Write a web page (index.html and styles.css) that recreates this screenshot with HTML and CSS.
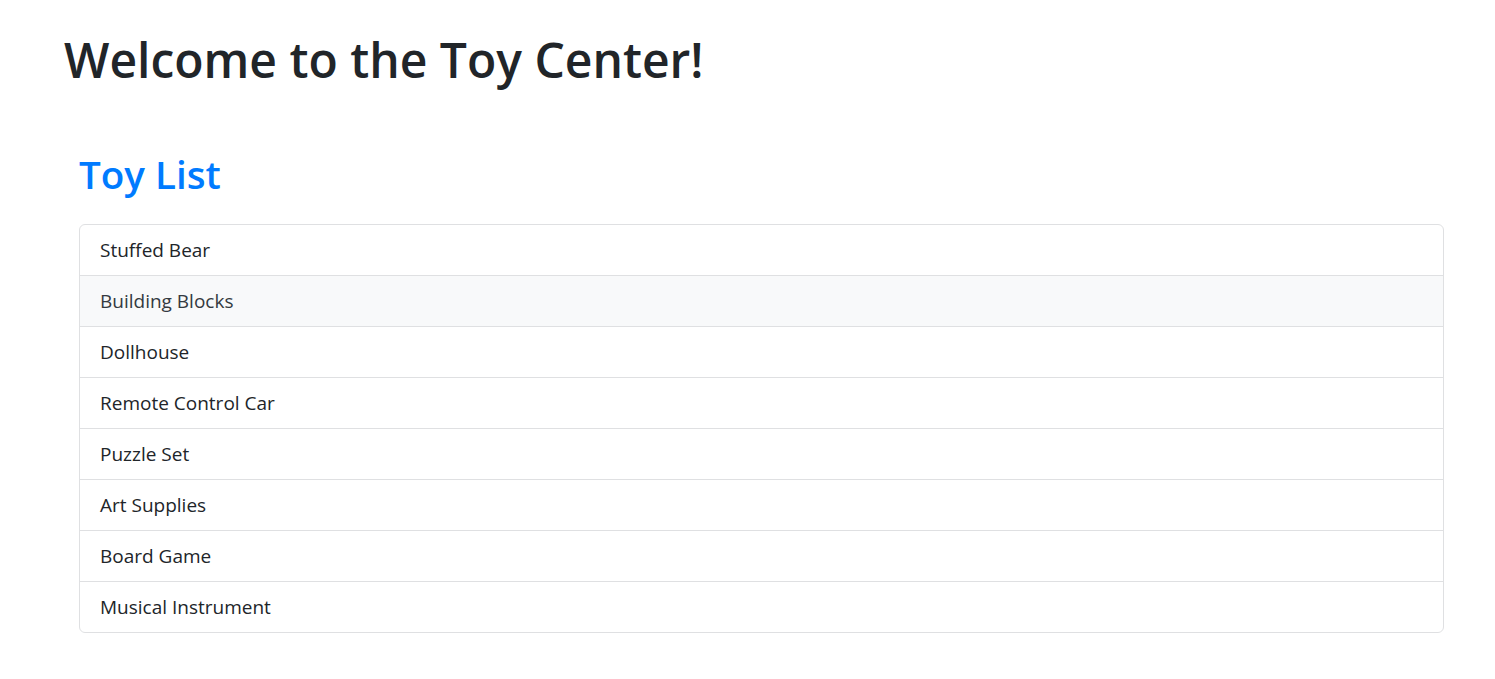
FILE: index.html
```html
<!DOCTYPE html>
<html lang="en">
<head>
<meta charset="utf-8">
<title>Toy Center</title>
<link rel="stylesheet" href="styles.css">
</head>
<body>
<div class="page">
  <h1 class="title">Welcome to the Toy Center!</h1>
  <section class="toys">
    <h2 class="toys-title">Toy List</h2>
    <ul class="list">
      <li class="item">Stuffed Bear</li>
      <li class="item item-hover">Building Blocks</li>
      <li class="item">Dollhouse</li>
      <li class="item">Remote Control Car</li>
      <li class="item">Puzzle Set</li>
      <li class="item">Art Supplies</li>
      <li class="item">Board Game</li>
      <li class="item">Musical Instrument</li>
    </ul>
  </section>
</div>
</body>
</html>
```
FILE: styles.css
```css
html, body {
  margin: 0;
  padding: 0;
  background: #fff;
}
body {
  font-family: "Open Sans", "Noto Sans", sans-serif;
  color: #212529;
}
.page {
  padding: 31px 51px 0 64px;
}
.title {
  margin: 0;
  font-size: 48px;
  font-weight: 600;
  line-height: 58px;
  color: #212529;
}
.toys {
  margin-left: 15px;
  padding-top: 62px;
}
.toys-title {
  margin: 0 0 26px;
  font-size: 38.6px;
  font-weight: 600;
  line-height: 47px;
  color: #007bff;
}
.list {
  list-style: none;
  margin: 0;
  padding: 0;
  border: 1px solid #dfe0e2;
  border-radius: 6px;
  overflow: hidden;
}
.item {
  padding: 12px 20px;
  font-size: 19px;
  line-height: 26px;
  border-top: 1px solid #dfe0e2;
}
.item:first-child {
  border-top: 0;
}
.item-hover {
  background: #f8f9fa;
  color: #343a40;
}
```
